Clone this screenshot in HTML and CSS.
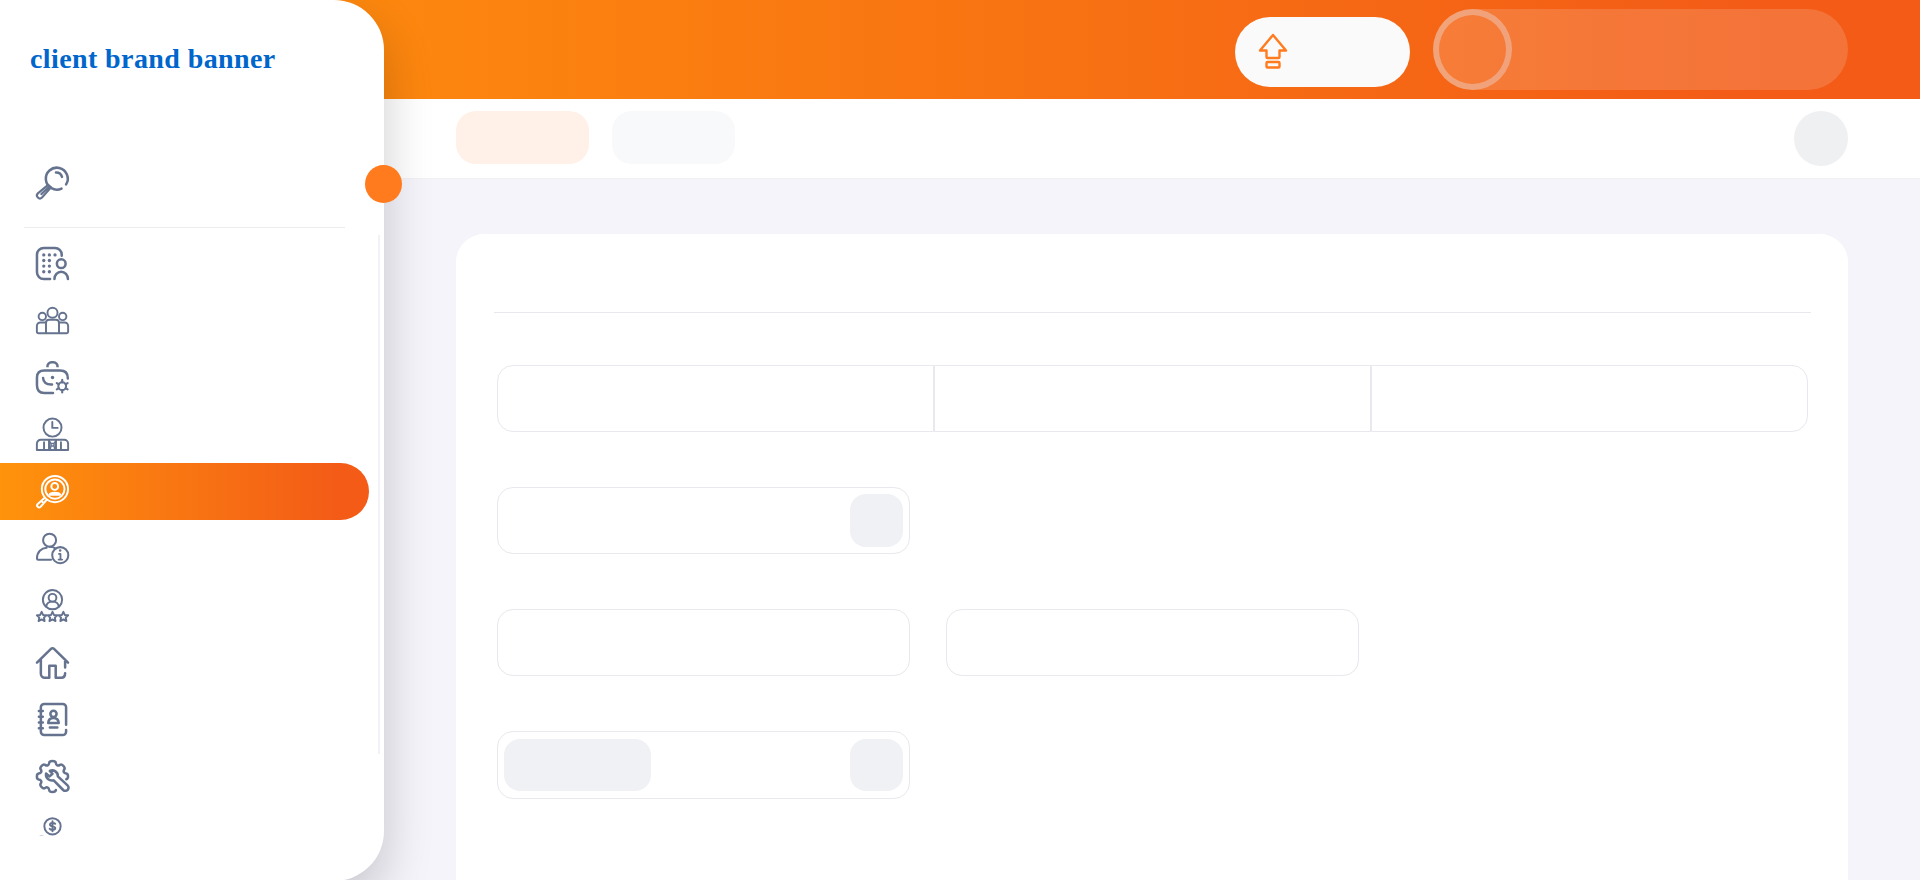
FILE: index.html
```html
<!DOCTYPE html>
<html lang="en">
<head>
<meta charset="utf-8">
<title>client brand banner</title>
<link rel="stylesheet" href="styles.css">
</head>
<body>
<div class="shell">
  <aside class="sidebar">
    <div class="brand">client brand banner</div>
    <div class="search">
      <svg class="icon" viewBox="0 0 34 34"><path d="M31 19A11.300 11.300 0 1 0 26.300 23.200"/><path d="M20.600 6.700a6.300 6.300 0 0 1 6.200 4.500"/><path stroke-width="2.200" d="M12.500 19.500 1.900 28.200a3 3 0 0 0 4.300 4.300L15.500 22M12.500 19.500l3 2.500M12.500 22.500 5.500 29"/></svg>
      <span class="toggle"></span>
    </div>
    <div class="nav-wrap">
      <nav class="nav">
        <a class="item"><svg class="icon" viewBox="0 0 34 34"><path d="M26.500 9V8a7 7 0 0 0-7-7H8a7 7 0 0 0-7 7v18a7 7 0 0 0 7 7h6.500M19 33a6.800 7.300 0 0 1 13.900 0"/><circle cx="26" cy="17.200" r="4.500"/><g class="solid"><circle cx="8" cy="8.200" r="1.700"/><circle cx="13.800" cy="8.200" r="1.700"/><circle cx="19.600" cy="8.200" r="1.700"/><circle cx="8" cy="13.900" r="1.700"/><circle cx="13.800" cy="13.900" r="1.700"/><circle cx="8" cy="19.700" r="1.700"/><circle cx="13.800" cy="19.700" r="1.700"/><circle cx="8" cy="25.500" r="1.700"/><circle cx="13.800" cy="25.500" r="1.700"/></g></svg></a>
        <a class="item"><svg class="icon thin" viewBox="0 0 34 34"><circle cx="17" cy="9" r="5.200"/><circle cx="6.500" cy="12.800" r="3.800"/><circle cx="27.500" cy="12.800" r="3.800"/><path d="M10.300 30.200V19.500a3.200 3.200 0 0 1 3.200-3.200h7a3.200 3.200 0 0 1 3.200 3.200v10.700M10 19H4.500A3.600 3.600 0 0 0 .9 22.600v6.100a1.500 1.500 0 0 0 1.500 1.500h29.200a1.500 1.500 0 0 0 1.500-1.500v-6.100a3.600 3.600 0 0 0-3.600-3.600H24"/></svg></a>
        <a class="item"><svg class="icon" viewBox="0 0 34 34"><path stroke-linecap="butt" d="M11.800 6.500V5.800A4.500 4.500 0 0 1 16 1.200h2a4.500 4.500 0 0 1 4.200 4.600v.7"/><path d="M32.800 18C32.800 12 30 9.700 25 9.700H8.500C3.500 9.700 1 12 1 17v8c0 5 2.500 8 7.500 8H17.500M7.300 17.500c.2 4.500 3.200 7 9.200 6.700"/><circle class="solid" cx="17" cy="17" r="1.800"/><circle cx="27" cy="26" r="4" stroke-width="2.100"/><path stroke-width="2.200" d="M27 19.500V22M27 30v2.500M21.400 22.800l2.100 1.200M30.500 28l2.100 1.200M21.400 29.200l2.100-1.200M30.500 24l2.100-1.200"/></svg></a>
        <a class="item"><svg class="icon thin" viewBox="0 0 34 34"><circle cx="17" cy="9.900" r="9.300"/><path d="M16.800 4.200v6h5.500M.9 33v-6.500a4 4 0 0 1 4-4h24.200a4 4 0 0 1 4 4V33zM8.300 25V33M13.400 22.500V33M20.600 22.500V33M25.700 25V33"/><path stroke-width="1.500" d="m13.400 23 2 3.200h3.200l2-3.200M15.400 26.200v2.600h3.200v-2.600M15.400 28.800l-.8 4M18.600 28.800l.8 4"/></svg></a>
        <a class="item active"><svg class="icon thin" viewBox="0 0 34 34"><circle cx="19.500" cy="14.500" r="13.500"/><circle cx="19.500" cy="14.500" r="9.900"/><circle cx="19.300" cy="11.800" r="3.500"/><path d="M13.800 20.300c.5-1.400 2.200-2 5.500-2s5 .6 5.700 2z"/><path d="m9 23.500-7.200 6.300a2 2 0 0 0 2.900 3L11 25.500M5.800 27l2 2"/></svg></a>
        <a class="item"><svg class="icon" viewBox="0 0 34 34"><g stroke-width="2.100"><circle cx="14" cy="8.400" r="6.700"/><path d="M15.500 28.500H2.200c-.8 0-1.200-.5-1.200-1.200C1 20.500 5.500 16.500 11 16.300M14 15.100c2.500 0 4.500.7 6.100 1.700"/><circle cx="25" cy="23.900" r="8.300"/></g><path stroke-width="1.900" d="M23.700 22.600h1.500v5.800M23.300 28.400h3.600"/><circle class="solid" cx="24.900" cy="19.100" r="1.300"/></svg></a>
        <a class="item"><svg class="icon thin" viewBox="0 0 34 34"><circle cx="17" cy="11" r="9.900"/><circle cx="17" cy="9" r="4"/><path d="M10.600 18c.3-3.200 2.800-5 6.400-5s6.100 1.800 6.400 5"/><path d="m5.800 23.500 1.500 3.200 3.400.4-2.500 2.400.7 3.500-3.100-1.700L2.700 33l.7-3.500L.9 27.100l3.400-.4zM17 23.500l1.500 3.200 3.400.4-2.500 2.400.7 3.500-3.100-1.700-3.100 1.700.7-3.500-2.500-2.400 3.400-.4zM28.200 23.500l1.500 3.200 3.400.4-2.500 2.400.7 3.500-3.100-1.700-3.100 1.700.7-3.500-2.500-2.400 3.400-.4z"/></svg></a>
        <a class="item"><svg class="icon" viewBox="0 0 34 34"><path d="M1 17.200 15.400 3a2.200 2.200 0 0 1 3.200 0L33 17.200M5 14v14.700a4 4 0 0 0 4 4h4.700V20.400h6.600v12.300h5.700c2.500 0 3.900-1.500 4-4.500M30 14v8.200"/></svg></a>
        <a class="item"><svg class="icon" viewBox="0 0 34 34"><path d="M31 22.500V4.500A3.500 3.500 0 0 0 27.500 1H8.500A3.500 3.500 0 0 0 5 4.500v25A3.500 3.500 0 0 0 8.500 33h19a3.500 3.500 0 0 0 3.500-3.500v-1.700M3 8.200h4M3 14.100h4M3 20h4M3 25.900h4M14.300 25.300h7.700"/><circle cx="18" cy="11.200" r="3.200"/><path d="M12.600 20.700c.2-3.500 2-5.200 5.400-5.200s5.200 1.700 5.400 5.200z"/></svg></a>
        <a class="item"><svg class="icon" viewBox="0 0 34 34"><path d="M20.500 31c-.5 2.700-6.500 2.700-6.900 0-.3-2.800-2.200-3.500-4.300-2.100-2 1.400-5.800-2.400-4.500-4.500 1.400-2.100.7-4-2-4.300-2.500-.4-2.500-5.800 0-6.200 2.700-.3 3.400-2.200 2-4.300-1.300-2.100 2.500-5.900 4.500-4.600 2.100 1.400 4 .7 4.300-2 .4-2.500 6.400-2.500 6.800 0 .3 2.700 2.200 3.400 4.300 2 2-1.300 5.800 2.500 4.500 4.600-1.400 2.100-.7 4 2 4.300 2.400.4 2.400 5.400 0 6"/><path d="M14.200 11.300c4-1.800 8.600 1 8.300 5.600l10 9.200a3.200 3.200 0 0 1-4.500 4.800L18.200 21c-4.500 1-8.700-2.300-7.800-7l3.600 2.900 3-2.600z"/></svg></a>
        <a class="item"><svg class="icon thin" viewBox="0 0 34 34"><circle cx="17" cy="9.600" r="8.400"/><path d="M19.800 7c-1-1.300-5.400-1.300-5.400 1s5.400 1 5.400 3.400-4.600 2.500-5.700.7M17 4.400v10.400"/><path d="M4.500 19.700h2.500" stroke-opacity=".4"/></svg></a>
      </nav>
      <span class="scrollbar"></span>
    </div>
  </aside>

  <div class="main">
    <header class="header">
      <div class="upgrade">
        <svg class="up-icon" viewBox="0 0 30 36"><path d="M15 2 28 17.500h-6.500V24a1 1 0 0 1-1 1h-11a1 1 0 0 1-1-1v-6.500H2z"/><rect x="8.500" y="29" width="13" height="5.500" rx="1"/></svg>
      </div>
      <div class="profile"><span class="avatar"></span></div>
    </header>
    <div class="tabs">
      <span class="tab current"></span>
      <span class="tab"></span>
      <span class="round"></span>
    </div>
    <section class="card">
      <div class="card-head"></div>
      <div class="form">
        <div class="group"><span></span><span></span><span></span></div>
        <div class="row"><div class="field end"><span class="chip"></span></div></div>
        <div class="row"><div class="field"></div><div class="field"></div></div>
        <div class="row"><div class="field tall"><span class="chip wide"></span><span class="chip"></span></div></div>
      </div>
    </section>
  </div>
</div>
</body>
</html>
```
FILE: styles.css
```css
* { box-sizing: border-box; }
body { margin: 0; height: 880px; overflow: hidden; background: #f5f4fb; font-family: "Liberation Serif", serif; }

.shell { display: grid; grid-template-columns: 384px 1fr; grid-template-rows: 881px; }

.sidebar {
  grid-column: 1; grid-row: 1; z-index: 2;
  display: flex; flex-direction: column;
  background: #fff;
  border-radius: 0 50px 50px 0;
  box-shadow: 0 20px 50px rgba(0, 0, 0, .2);
}
.brand {
  height: 137px; padding: 43px 0 0 30px;
  color: #06c; font-size: 28px; line-height: 32px; font-weight: bold; letter-spacing: .4px;
  white-space: nowrap;
}
.search {
  height: 91px; margin-left: 24px; width: 321px; padding: 28px 0 0 12px;
  display: flex; border-bottom: 1px solid #ececef;
}
.search .icon { margin-top: 1px; }
.toggle { flex: none; width: 37px; height: 38px; margin-left: 296px; border-radius: 50%; background: #ff7b1e; }
.nav-wrap { display: flex; gap: 9px; padding-top: 7px; }
.nav { width: 369px; height: 601px; overflow: hidden; }
.item { height: 57px; display: flex; align-items: center; padding-left: 36px; }
.item.active { border-radius: 0 29px 29px 0; background: linear-gradient(90deg, #ff930c, #f35b17 92%); }
.scrollbar { width: 2px; height: 519px; background: #f1f1f7; }

.icon { flex: none; width: 33px; height: 33px; fill: none; stroke: #65738f; stroke-width: 2.6; stroke-linecap: round; stroke-linejoin: round; overflow: visible; }
.icon.thin { stroke-width: 2; }
.icon .solid { fill: #65738f; stroke: none; }
.active .icon { stroke: #fff; }

.main { grid-column: 1 / -1; grid-row: 1; display: flex; flex-direction: column; }
.header {
  height: 99px; flex: none; padding-right: 72px;
  display: flex; align-items: center; justify-content: flex-end; gap: 23px;
  background: linear-gradient(90deg, #ff930c, #f35b17 92%);
}
.upgrade { width: 175px; height: 70px; margin-top: 5px; padding: 16px 0 0 23px; border-radius: 35px; background: #fafafa; }
.up-icon { display: block; width: 30px; height: 36px; fill: none; stroke: #ff7b1e; stroke-width: 2.400; stroke-linejoin: round; }
.profile { width: 415px; height: 81px; border-radius: 41px; background: rgba(255, 255, 255, .15); }
.avatar { display: block; width: 79px; height: 81px; border: 6px solid rgba(232, 232, 240, .36); border-radius: 50%; }

.tabs {
  height: 80px; flex: none; padding: 12px 72px 0 456px;
  display: flex; gap: 23px; background: #fff; border-bottom: 1px solid #f1f1f4;
}
.tab { width: 123px; height: 53px; border-radius: 20px; background: #f8f9fb; }
.tab.current { width: 133px; background: #fff0e8; }
.round { width: 54px; height: 55px; margin-left: auto; border-radius: 50%; background: #eff0f2; }

.card { flex: 1; margin: 55px 72px 0 456px; padding: 0 37px 0 38px; border-radius: 28px 28px 0 0; background: #fff; }
.card-head { height: 79px; border-bottom: 1px solid #e8e8ef; }
.form { display: flex; flex-direction: column; gap: 55px; padding: 52px 3px 0; }
.group { display: grid; grid-template-columns: repeat(3, 1fr); height: 67px; }
.group span { border: 1px solid #e8e8ee; }
.group span:first-child { border-radius: 16px 0 0 16px; }
.group span:last-child { border-radius: 0 16px 16px 0; }
.row { display: flex; gap: 36px; }
.field { width: 413px; height: 67px; padding: 0 6px; border: 1px solid #e8e8ee; border-radius: 16px; display: flex; align-items: center; justify-content: space-between; }
.field.end { justify-content: flex-end; }
.field.tall { height: 68px; }
.chip { width: 53px; height: 53px; border-radius: 16px; background: #f0f1f5; }
.tall .chip { height: 52px; }
.chip.wide { width: 147px; }
```
